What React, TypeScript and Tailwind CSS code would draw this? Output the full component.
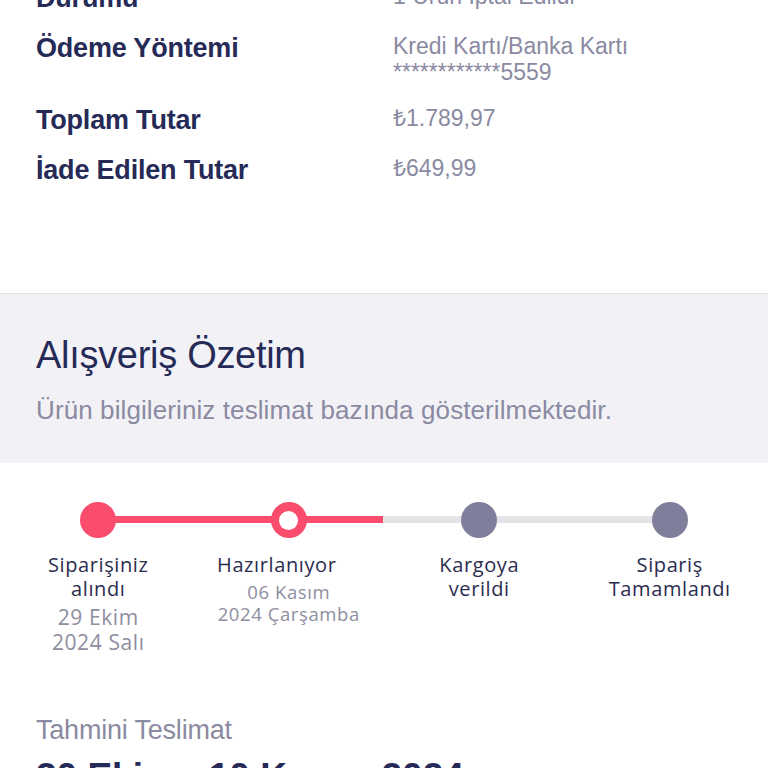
import React from "react";

const sans = "font-['Liberation_Sans',Arial,sans-serif]";
const stepFont = "font-['Open_Sans',sans-serif]";

function Row({ label, values }: { label: string; values: string[] }) {
  return (
    <div className="flex">
      <div className="w-[357px] shrink-0 text-[27px] leading-[30px] font-bold text-[#262a56] tracking-[-0.2px]">
        {label}
      </div>
      <div className="flex flex-col text-[23px] leading-[26px] text-[#8a8aa2]">
        {values.map((v, i) => (
          <div key={i}>{v}</div>
        ))}
      </div>
    </div>
  );
}

type Step = {
  title: string[];
  dates?: string[];
  state: "done" | "current" | "todo";
  titleClass?: string;
  dateClass?: string;
};

const steps: Step[] = [
  { title: ["Siparişiniz", "alındı"], dates: ["29 Ekim", "2024 Salı"], state: "done", dateClass: "mt-[4px] leading-[25px] text-[21px]" },
  { title: ["Hazırlanıyor"], dates: ["06 Kasım", "2024 Çarşamba"], state: "current", titleClass: "mr-[24px]", dateClass: "mt-[4px] leading-[22px] text-[18.5px]" },
  { title: ["Kargoya", "verildi"], state: "todo" },
  { title: ["Sipariş", "Tamamlandı"], state: "todo" },
];

function Dot({ state }: { state: Step["state"] }) {
  if (state === "done") return <div className="w-[36px] h-[36px] rounded-full bg-[#fa4c6c]" />;
  if (state === "current")
    return (
      <div className="w-[36px] h-[36px] rounded-full bg-[#fa4c6c] flex items-center justify-center">
        <div className="w-[19px] h-[19px] rounded-full bg-white" />
      </div>
    );
  return <div className="w-[36px] h-[36px] rounded-full bg-[#7f7f9c]" />;
}

export default function App() {
  return (
    <div className={`w-[768px] h-[768px] overflow-hidden bg-white ${sans}`}>
      <div className="h-[293px] overflow-hidden">
        <div className="-mt-[17px] px-[36px] flex flex-col gap-[20px]">
          <Row label="Durumu" values={["1 Ürün İptal Edildi"]} />
          <Row label="Ödeme Yöntemi" values={["Kredi Kartı/Banka Kartı", "************5559"]} />
          <Row label="Toplam Tutar" values={["₺1.789,97"]} />
          <Row label="İade Edilen Tutar" values={["₺649,99"]} />
        </div>
      </div>

      <div className="border-t border-[#e2e2e6] bg-[#f2f2f6] h-[170px] px-[36px] pt-[39px]">
        <div className="text-[38px] leading-[44px] text-[#262a56] tracking-[-0.3px]">Alışveriş Özetim</div>
        <div className="mt-[17px] text-[26px] leading-[32px] text-[#8a8aa2] tracking-[0.1px]">
          Ürün bilgileriniz teslimat bazında gösterilmektedir.
        </div>
      </div>

      <div className="relative h-[252px] px-[3px] pt-[39px]">
        <div className="absolute top-[53px] left-[98px] w-[285px] h-[7px] bg-[#fa4c6c]" />
        <div className="absolute top-[53px] left-[383px] w-[286px] h-[7px] bg-[#e4e4e8]" />
        <div className="relative grid grid-cols-4">
          {steps.map((s, i) => (
            <div key={i} className={`flex flex-col items-center text-center ${stepFont}`}>
              <Dot state={s.state} />
              <div className={`mt-[15px] text-[20px] leading-[24px] tracking-[0.6px] text-[#2b2d4f] whitespace-nowrap ${s.titleClass ?? ""}`}>
                {s.title.map((t, j) => (
                  <div key={j}>{t}</div>
                ))}
              </div>
              {s.dates && (
                <div className={`tracking-[0.6px] ${s.dateClass} text-[#8e8ea0] whitespace-nowrap`}>
                  {s.dates.map((t, j) => (
                    <div key={j}>{t}</div>
                  ))}
                </div>
              )}
            </div>
          ))}
        </div>
      </div>

      <div className="px-[36px]">
        <div className="text-[27px] leading-[30px] text-[#8a8aa2] tracking-[-0.2px]">Tahmini Teslimat</div>
        <div className="mt-[12px] text-[37px] leading-[40px] font-bold text-[#262a56]">30 Ekim - 10 Kasım 2024</div>
      </div>
    </div>
  );
}
